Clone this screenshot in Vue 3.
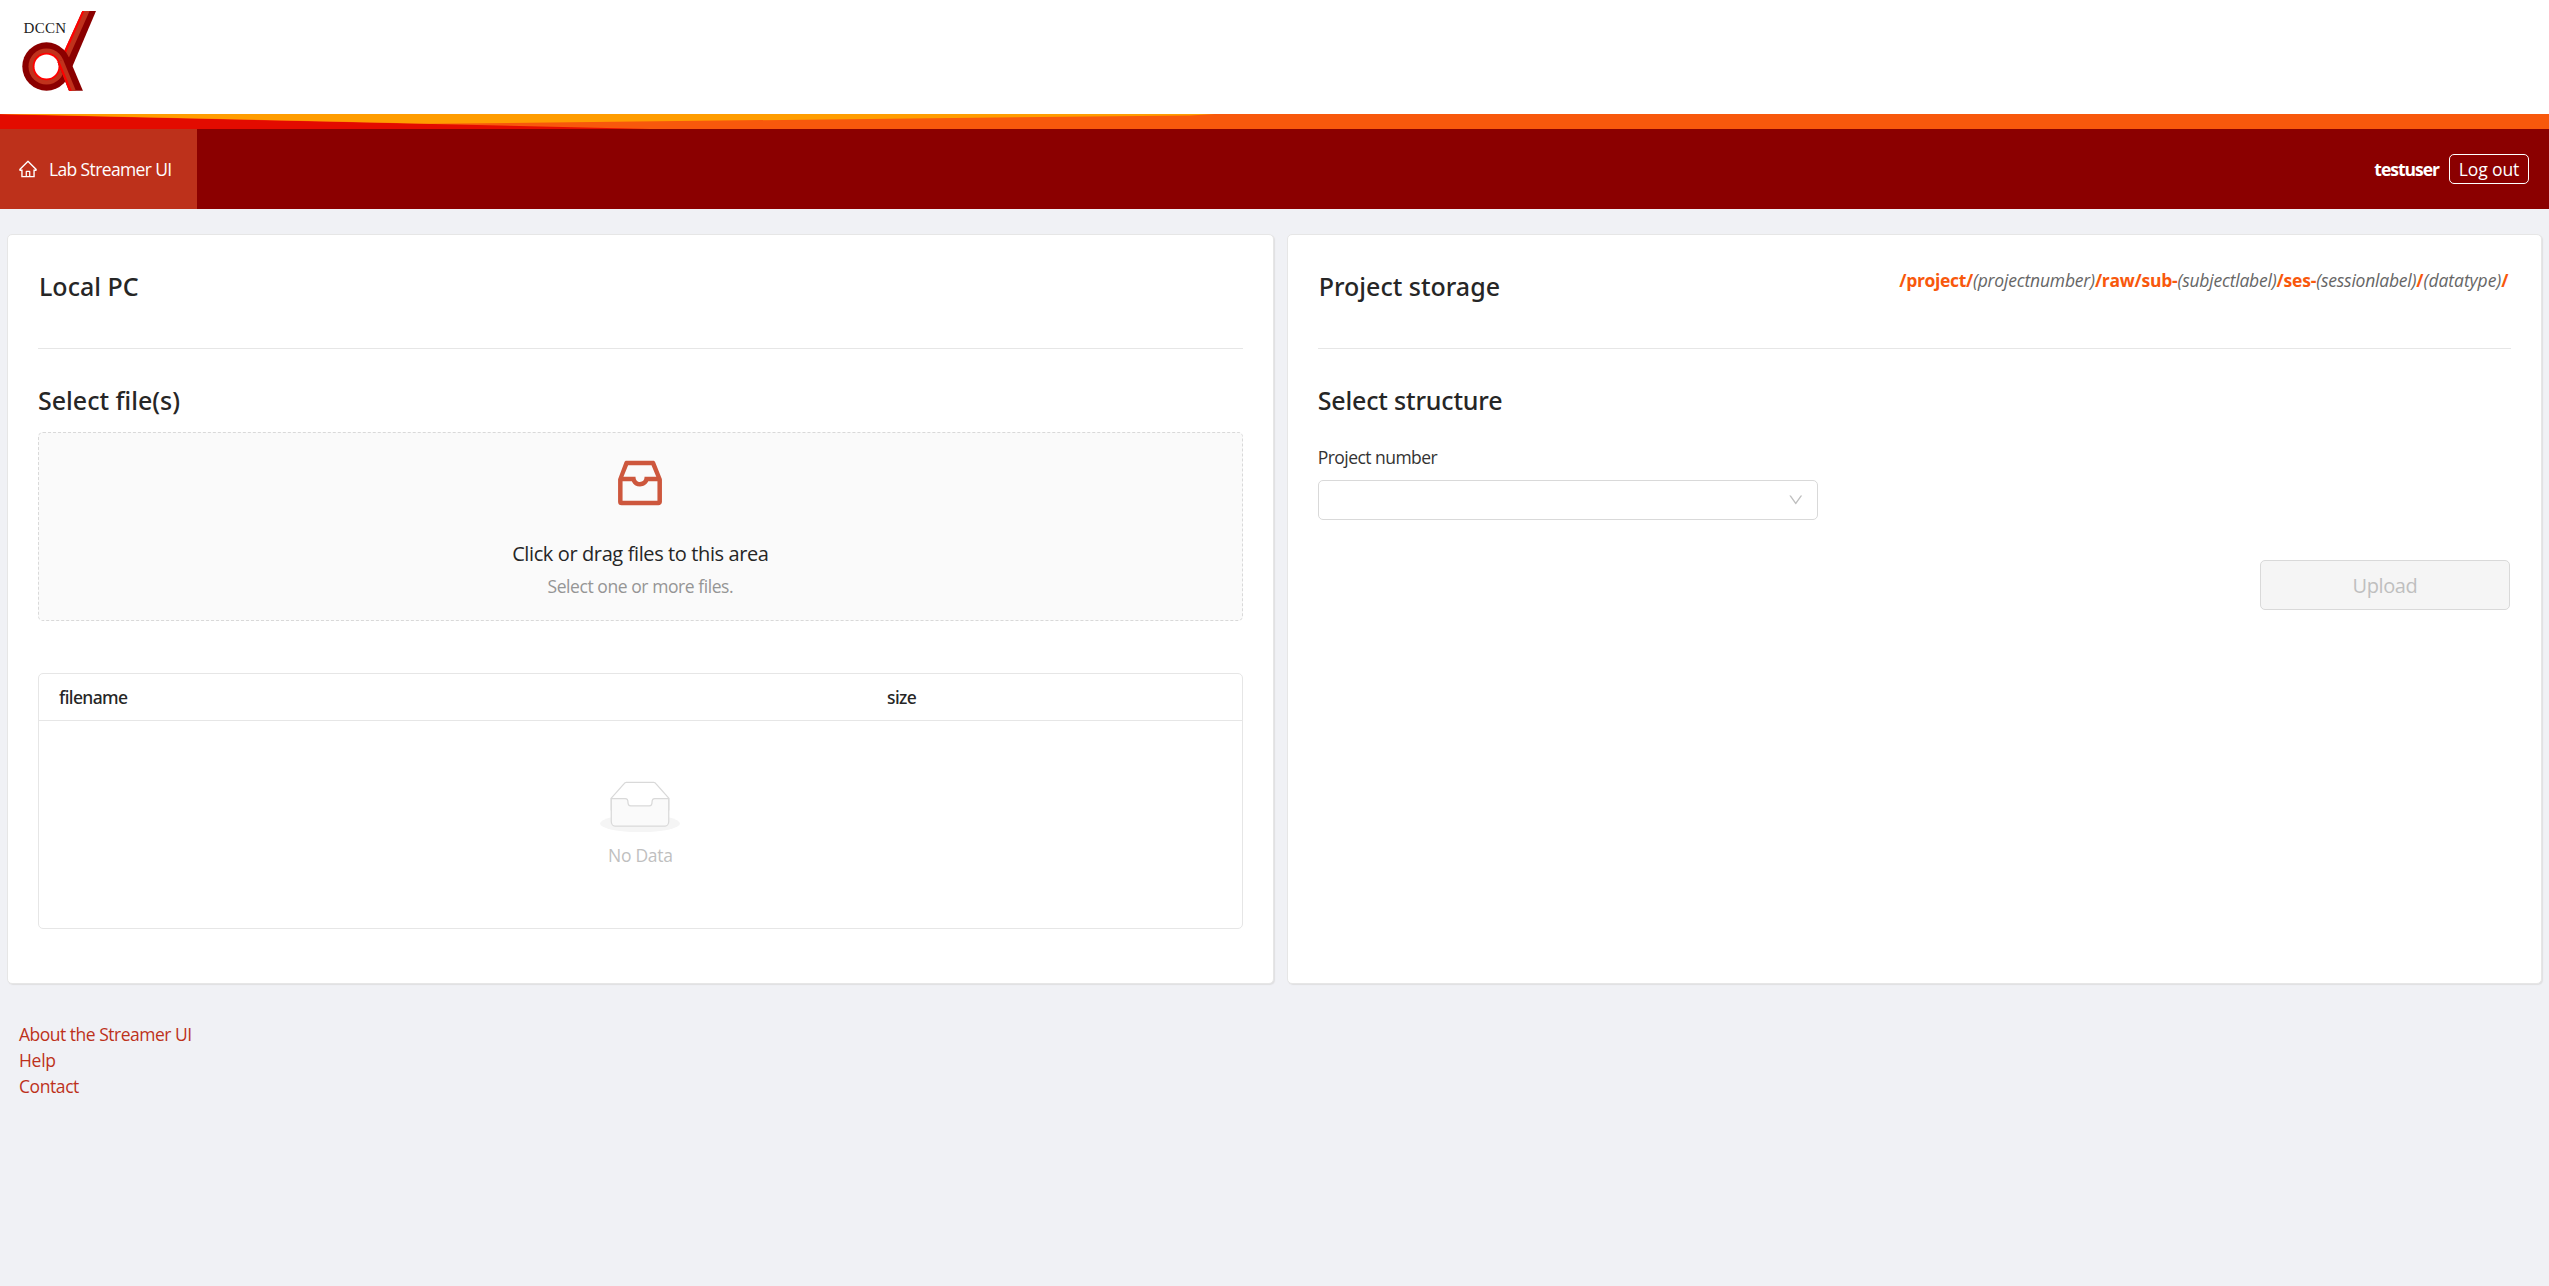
<script setup>
const pathParts = [
  { text: '/project/', fixed: true, spacing: -0.34 },
  { text: '(projectnumber)', spacing: -0.19 },
  { text: '/raw/sub-', fixed: true, spacing: -0.26 },
  { text: '(subjectlabel)', spacing: -0.22 },
  { text: '/ses-', fixed: true, spacing: -0.16 },
  { text: '(sessionlabel)', spacing: -0.23 },
  { text: '/', fixed: true, spacing: 0 },
  { text: '(datatype)', spacing: -0.05 },
  { text: '/', fixed: true, spacing: 0 },
]
</script>

<template>
  <div class="page">
    <header class="brand">
      <svg class="logo" width="90" height="84" viewBox="10 10 90 84">
        <defs>
          <clipPath id="logo-clip"><rect x="10" y="11" width="90" height="79.7" /></clipPath>
          <clipPath id="leg-clip"><path d="M46 66.5 L80 52 L110 90.7 L50 90.7 Z" /></clipPath>
        </defs>
        <text class="logo-text" x="23.5" y="32.6">DCCN</text>
        <g clip-path="url(#logo-clip)">
          <path fill="#8b0000" d="M82.3 11 H96 L72.4 66.5 L64 60 Z" />
          <path fill="#c0321c" d="M82.3 11 H89.6 L66 64 L61 58 Z" />
          <path fill="#ff0000" d="M82.3 11 H84.4 L62 62 L61 58 Z" />
        </g>
        <circle cx="46.5" cy="66.5" r="24.2" fill="#8b0000" />
        <circle cx="46.5" cy="66.5" r="18" fill="#c0321c" />
        <circle cx="46.5" cy="66.5" r="13.8" fill="#ff0000" />
        <circle cx="46.5" cy="66.5" r="12" fill="#fff" />
        <g clip-path="url(#leg-clip)">
          <path fill="#8b0000" d="M68.8 57.2 L83 91 H69 L57.6 62 Z" />
          <path fill="#c0321c" d="M63.1 59.6 L76 91 H69 L57.6 62 Z" />
          <path fill="#ff0000" d="M59.3 61.2 L71.8 91 H69.3 L57.6 62 Z" />
        </g>
      </svg>
    </header>

    <svg class="stripe" viewBox="0 0 2549 15" preserveAspectRatio="none">
      <rect width="2549" height="15" fill="#f8580c" />
      <path fill="#e30b00" d="M0 0.3 L650 15 H0 Z" />
      <path fill="#ff9d00" d="M0 0 H1215 L1190 1.4 L430 9.8 Z" />
    </svg>

    <nav class="nav">
      <a class="nav-item">
        <svg width="20" height="20" viewBox="0 0 1024 1024" fill="currentColor"><path d="M946.5 505L560.1 118.8l-25.9-25.9a31.5 31.5 0 00-44.4 0L77.5 505a63.9 63.9 0 00-18.8 46c.4 35.2 29.7 63.3 64.9 63.3h42.5V940h691.8V614.3h43.4c17.1 0 33.2-6.7 45.3-18.8a63.6 63.6 0 0018.7-45.3c0-17-6.7-33.1-18.8-45.2zM568 868H456V664h112v204zm217.9-325.7V868H632V640c0-22.1-17.9-40-40-40H432c-22.1 0-40 17.9-40 40v228H238.1V542.3h-96l370-369.7 23.1 23.1L882 542.3h-96.1z" /></svg>
        <span class="nav-label">Lab Streamer UI</span>
      </a>
      <div class="user">
        <span class="user-name">testuser</span>
        <button class="logout">Log out</button>
      </div>
    </nav>

    <main class="columns">
      <section class="card card-local">
        <div class="card-head"><h2 class="title">Local PC</h2></div>
        <h2 class="title section">Select file(s)</h2>
        <div class="dropzone">
          <svg class="inbox" width="60" height="60" viewBox="0 0 1024 1024" fill="currentColor"><path d="M885.2 446.3l-.2-.8-112.2-285.1c-5-16.1-19.9-27.2-36.8-27.2H281.2c-17 0-32.1 11.3-36.9 27.6L139.4 443l-.3.7-.2.8c-1.3 4.9-1.7 9.9-1 14.8-.1 1.6-.2 3.2-.2 4.8V830a60.9 60.9 0 0060.8 60.8h627.2c33.5 0 60.8-27.3 60.9-60.8V464.1c0-1.3 0-2.6-.1-3.7.4-4.9 0-9.6-1.3-14.1zm-295.8-43l-.3 15.7c-.8 44.9-31.8 75.1-77.1 75.1-22.1 0-41.1-7.1-54.8-20.6S436 441.2 435.6 419l-.3-15.7H229.5L309 210h399.2l81.7 193.3H589.4zm-375 76.8h157.3c24.3 57.1 76 90.8 140.4 90.8 33.7 0 65-9.4 90.3-27.2 22.2-15.6 39.5-37.4 50.7-63.6h156.5V814H214.4V480.1z" /></svg>
          <p class="drop-text">Click or drag files to this area</p>
          <p class="drop-hint">Select one or more files.</p>
        </div>
        <div class="table">
          <div class="table-head">
            <span class="th">filename</span>
            <span class="th">size</span>
          </div>
          <div class="empty">
            <svg width="80" height="51.25" viewBox="0 0 64 41">
              <g transform="translate(0 1)" fill="none" fill-rule="evenodd">
                <ellipse fill="#f5f5f5" cx="32" cy="33" rx="32" ry="7" />
                <g stroke="#d9d9d9">
                  <path d="M55 12.76L44.854 1.258C44.367.474 43.656 0 42.907 0H21.093c-.749 0-1.46.474-1.947 1.257L9 12.761V22h46v-9.24z" />
                  <path fill="#fafafa" d="M41.613 15.931c0-1.605.994-2.93 2.227-2.931H55v18.137C55 33.26 53.68 35 52.05 35h-40.1C10.32 35 9 33.259 9 31.137V13h11.16c1.233 0 2.227 1.323 2.227 2.928v.022c0 1.605 1.005 2.901 2.237 2.901h14.752c1.232 0 2.237-1.308 2.237-2.913v-.007z" />
                </g>
              </g>
            </svg>
            <span class="empty-text">No Data</span>
          </div>
        </div>
      </section>

      <section class="card card-storage">
        <div class="card-head">
          <h2 class="title">Project storage</h2>
          <div class="path"><span
            v-for="(part, i) in pathParts"
            :key="i"
            :class="part.fixed ? 'path-fixed' : 'path-var'"
            :style="{ letterSpacing: part.spacing + 'px' }"
          >{{ part.text }}</span></div>
        </div>
        <h2 class="title section structure">Select structure</h2>
        <label class="label">Project number</label>
        <div class="select">
          <svg width="17.5" height="17.5" viewBox="0 0 1024 1024" fill="currentColor"><path d="M884 256h-75c-5.1 0-9.9 2.5-12.9 6.6L512 654.2 227.9 262.6c-3-4.1-7.8-6.6-12.9-6.6h-75c-6.5 0-10.3 7.4-6.5 12.7l352.6 486.1c12.8 17.6 39 17.6 51.7 0l352.6-486.1c3.9-5.3.1-12.7-6.4-12.7z" /></svg>
        </div>
        <button class="upload" disabled>Upload</button>
      </section>
    </main>

    <footer class="footer">
      <a class="about">About the Streamer UI</a>
      <a class="help">Help</a>
      <a class="contact">Contact</a>
    </footer>
  </div>
</template>

<style>
body {
  background: #f0f1f5;
}
</style>

<style scoped>
.page {
  min-height: 1286px;
  box-sizing: border-box;
  background: #f0f1f5;
  color: #262626;
  font: 17.5px/28px "Open Sans", "Noto Sans", sans-serif;
}
.page * {
  box-sizing: border-box;
}
svg {
  display: block;
  flex: none;
}
p,
h2 {
  margin: 0;
}
.brand {
  height: 114px;
  padding: 10px 0 0 10px;
  background: #fff;
}
.logo-text {
  font: 15px "Liberation Serif", serif;
  letter-spacing: 0.3px;
  fill: #222;
}
.stripe {
  width: 100%;
  height: 15px;
}
.nav {
  display: flex;
  justify-content: space-between;
  height: 80px;
  background: #8b0000;
  color: #fff;
}
.nav-item {
  display: flex;
  align-items: center;
  gap: 11px;
  width: 197px;
  padding-left: 18px;
  background: #bd311b;
}
.nav-label {
  letter-spacing: -0.63px;
  white-space: nowrap;
}
.user {
  display: flex;
  align-items: center;
  gap: 10px;
  padding-right: 20px;
}
.user-name {
  font-weight: 700;
  letter-spacing: -1px;
}
.logout {
  width: 80px;
  height: 30px;
  padding: 0;
  border: 1px solid #fff;
  border-radius: 5px;
  background: transparent;
  color: #fff;
  font: inherit;
  letter-spacing: -0.1px;
  line-height: 28px;
}
.columns {
  display: flex;
  gap: 13px;
  padding: 25px 7px 0;
}
.card {
  height: 750px;
  padding: 31px 30px 0;
  border: 1px solid #e6e6e6;
  border-radius: 5px;
  background: #fff;
  box-shadow: 1px 1px 1px #dfdfe1;
}
.card-local {
  flex: 1267 1 0;
}
.card-storage {
  flex: 1255 1 0;
}
.card-head {
  display: flex;
  justify-content: space-between;
  height: 83px;
  padding-left: 1px;
  border-bottom: 1px solid #e6e6e6;
}
.title {
  padding-top: 4px;
  font: 500 25px/32px "Noto Sans", "Open Sans", sans-serif;
}
.section {
  margin-top: 35px;
  padding-top: 0;
}
.structure {
  letter-spacing: -0.17px;
}
.dropzone {
  display: flex;
  flex-direction: column;
  align-items: center;
  height: 189px;
  margin-top: 16px;
  padding-top: 20px;
  border: 1px dashed #d9d9d9;
  border-radius: 5px;
  background: #fafafa;
}
.inbox {
  color: #cd573d;
}
.drop-text {
  margin-top: 26px;
  font-size: 20px;
  line-height: 30px;
  letter-spacing: -0.39px;
}
.drop-hint {
  margin-top: 3px;
  color: #959595;
  letter-spacing: -0.43px;
}
.table {
  height: 256px;
  margin-top: 52px;
  border: 1px solid #e6e6e6;
  border-radius: 5px;
}
.table-head {
  display: grid;
  grid-template-columns: 828px 1fr;
  align-items: center;
  height: 47px;
  padding-left: 20px;
  border-bottom: 1px solid #e6e6e6;
}
.th {
  font-family: "Noto Sans", "Open Sans", sans-serif;
  font-weight: 500;
  letter-spacing: -0.6px;
}
.empty {
  display: flex;
  flex-direction: column;
  align-items: center;
  padding-top: 60px;
}
.empty-text {
  margin-top: 8.75px;
  color: #bfbfbf;
  letter-spacing: -0.3px;
}
.path {
  margin-right: 2.5px;
  white-space: nowrap;
}
.path-fixed {
  color: #f8580c;
  font-weight: 700;
}
.path-var {
  color: #666;
  font-style: italic;
}
.label {
  display: block;
  margin-top: 27px;
  color: #333;
  letter-spacing: -0.54px;
}
.select {
  display: flex;
  align-items: center;
  justify-content: flex-end;
  width: 500px;
  height: 40px;
  margin-top: 9px;
  padding-right: 12.5px;
  border: 1px solid #d9d9d9;
  border-radius: 5px;
  color: #bfbfbf;
}
.upload {
  display: block;
  width: 250px;
  height: 50px;
  margin: 40px 1px 0 auto;
  padding: 1px 0 0;
  border: 1px solid #d9d9d9;
  border-radius: 5px;
  background: #f5f5f5;
  color: #bfbfbf;
  font: 20px/47px "Open Sans", sans-serif;
  letter-spacing: -0.4px;
}
.footer {
  display: flex;
  flex-direction: column;
  align-items: flex-start;
  padding: 37px 19px 0;
  color: #bd311b;
  line-height: 26px;
}
.about {
  letter-spacing: -0.5px;
}
.help {
  letter-spacing: -0.3px;
}
.contact {
  letter-spacing: -0.42px;
}
</style>
